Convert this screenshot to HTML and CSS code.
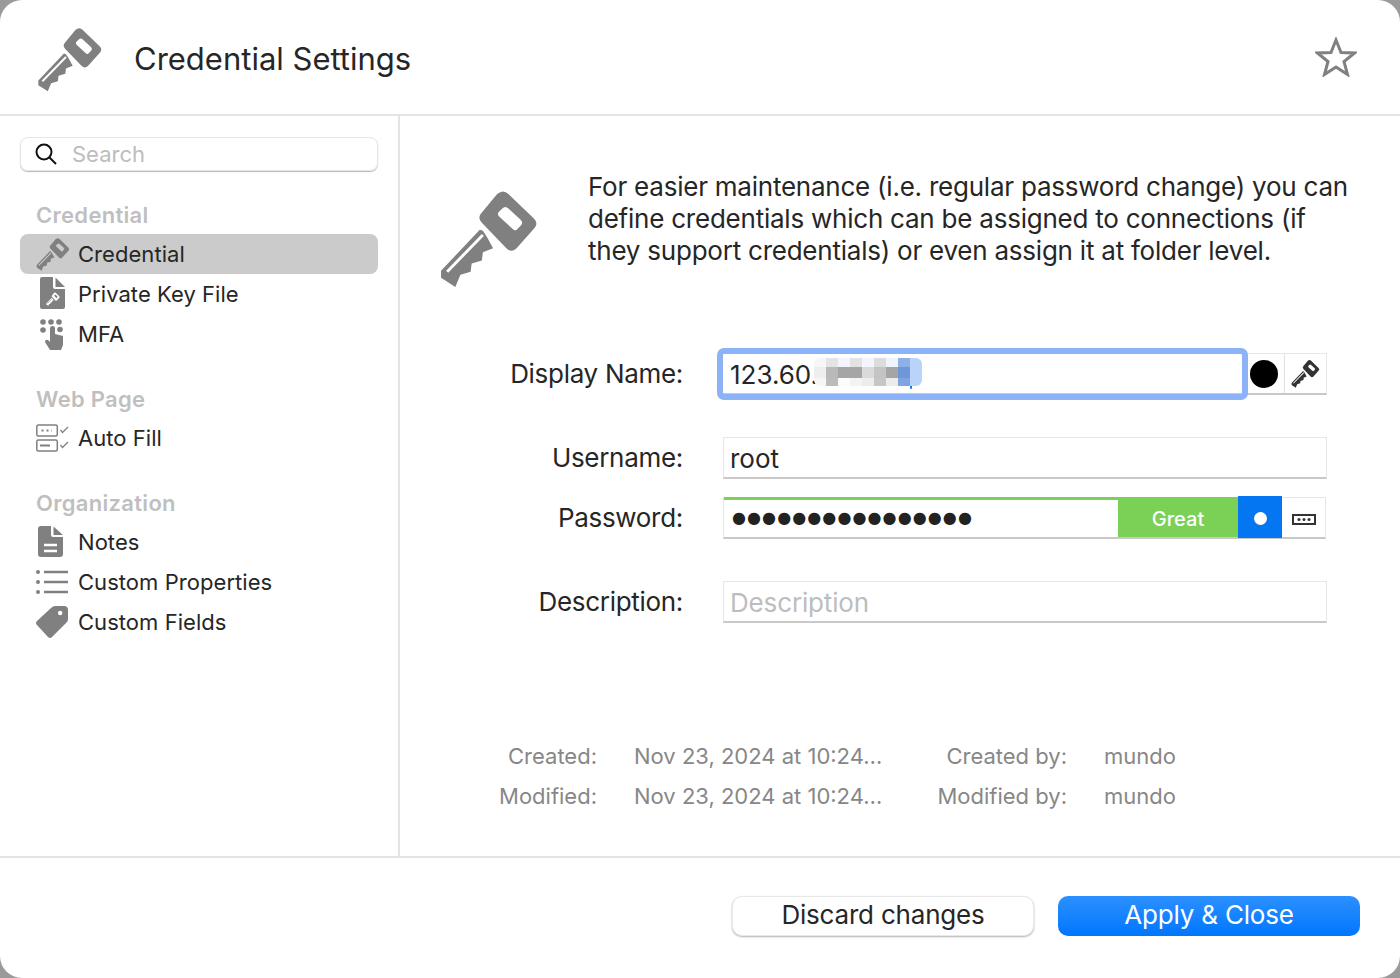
FILE: index.html
```html
<!DOCTYPE html>
<html lang="en">
<head>
    <meta charset="UTF-8">
    <title>Credential Settings</title>
    <link rel="stylesheet" href="styles.css">
</head>
<body>
    <svg class="defs" width="0" height="0">
        <symbol id="key" viewBox="9 8 98 98">
            <path fill-rule="evenodd" d="M66,14 Q72,9 77,14 L102,38 Q107,43 102,48 L85,67 Q80,72 75,67 L51,42 Q46,37 51,32 Z M71,28 Q74,25 77,28 L89,39 Q92,42 89,45 L86,48 Q84,51 81,48 L69,37 Q65,34 68,31 Z"/>
            <path fill-rule="evenodd" d="M49,49 L11,89 L11,96 L25,105 L30,93 L40,90 L41,82 L51,79 L52,71 L62,67 L56,56 L52,50 Z M51,53 L53,55 L18,91 L16,89 Z"/>
        </symbol>
    </svg>

    <div class="window">
        <header class="topbar">
            <svg class="top-key"><use href="#key"/></svg>
            <h1>Credential Settings</h1>
            <svg class="star" viewBox="0 0 42 40"><path d="M21,3 L26,15.500 L39.500,16 L29,24.500 L32.500,37.500 L21,30 L9.500,37.500 L13,24.500 L2.500,16 L16,15.500 Z"/></svg>
        </header>

        <div class="middle">
            <aside class="sidebar">
                <div class="search">
                    <svg class="search-icon" viewBox="0 0 22 22"><circle cx="9" cy="9" r="7.500"/><path d="M14.500,14.500 L21,21"/></svg>
                    <span>Search</span>
                </div>

                <h3>Credential</h3>
                <div class="row selected">
                    <svg class="ico"><use href="#key"/></svg>Credential
                </div>
                <div class="row">
                    <svg class="ico" viewBox="0 0 34 34">
                        <path d="M6,0 H17 V10 Q17,12 19,12 H29 V30 Q29,32 27,32 H6 Q4,32 4,30 V2 Q4,0 6,0Z"/>
                        <path d="M19.500,0.500 L29,10 H19.500Z"/>
                        <svg class="mini" x="10" y="15" width="14" height="14"><use href="#key"/></svg>
                    </svg>Private Key File
                </div>
                <div class="row">
                    <svg class="ico" viewBox="0 0 34 34">
                        <circle cx="7" cy="5" r="2.800"/><circle cx="15" cy="5" r="2.800"/><circle cx="23" cy="5" r="2.800"/>
                        <circle cx="7" cy="13" r="2.800"/><circle cx="24" cy="12.500" r="2.800"/>
                        <path d="M14,11 Q14,9 16.500,9 Q19,9 19,11 V17 L27,19 V28 L25,33 H14 L9,25 Q9,22 12,23 L14,25 Z"/>
                    </svg>MFA
                </div>

                <h3>Web Page</h3>
                <div class="row">
                    <svg class="ico lines" viewBox="0 0 34 34">
                        <rect x="0.800" y="4" width="20.500" height="11" rx="1.500"/>
                        <rect x="0.800" y="19" width="20.500" height="11" rx="1.500"/>
                        <path class="thin" d="M24.500,9 L26.500,11.500 L32,6"/>
                        <path class="thin" d="M24.500,24 L26.500,26.500 L32,21"/>
                        <path d="M4,24.500 H14"/>
                        <path class="dotted" d="M5.500,9.500 H16"/>
                    </svg>Auto Fill
                </div>

                <h3>Organization</h3>
                <div class="row">
                    <svg class="ico" viewBox="0 0 34 34">
                        <path d="M5,1 H15 V10 Q15,12 17,12 H27 V29 Q27,32 24,32 H5 Q2,32 2,29 V4 Q2,1 5,1Z"/>
                        <path d="M17.500,1.500 L27,10 H17.500Z"/>
                        <path class="cut" d="M8,20 H21 M8,26 H21"/>
                    </svg>Notes
                </div>
                <div class="row">
                    <svg class="ico lines list" viewBox="0 0 34 34">
                        <circle class="solid" cx="2" cy="7" r="2"/><circle class="solid" cx="2" cy="17" r="2"/><circle class="solid" cx="2" cy="27" r="2"/>
                        <path d="M8,7 H32 M8,17 H32 M8,27 H32"/>
                    </svg>Custom Properties
                </div>
                <div class="row">
                    <svg class="ico" viewBox="0 0 34 34">
                        <path fill-rule="evenodd" d="M15,3 Q17,1 19,1 H28 Q32,1 32,5 V14 Q32,16 31,17 L16,32 Q14,34 12,32 L1,20 Q-1,18 1,16 Z M22,8 A2.200,2.200 0 1 0 26.400,8 A2.200,2.200 0 1 0 22,8 Z"/>
                    </svg>Custom Fields
                </div>
            </aside>

            <main class="content">
                <section class="intro">
                    <svg class="big-key"><use href="#key"/></svg>
                    <p>For easier maintenance (i.e. regular password change) you can define credentials which can be assigned to connections (if they support credentials) or even assign it at folder level.</p>
                </section>

                <section class="form">
                    <label>Display Name:</label>
                    <div class="field name-field">
                        <div class="name-input">
                            123.60.
                            <i class="caret"></i>
                            <svg class="mosaic" viewBox="0 0 108 28" shape-rendering="crispEdges">
                                <rect x="0" y="0" width="12" height="9" fill="#f6f6f6"/><rect x="12" y="0" width="12" height="9" fill="#e4e4e4"/><rect x="24" y="0" width="12" height="9" fill="#f2f5fc"/><rect x="36" y="0" width="12" height="9" fill="#e3e3e3"/><rect x="48" y="0" width="12" height="9" fill="#f2f5fc"/><rect x="60" y="0" width="12" height="9" fill="#dcdcdc"/><rect x="72" y="0" width="12" height="9" fill="#f0f4fd"/><rect x="84" y="0" width="12" height="9" fill="#8fb0e6"/><rect x="96" y="0" width="12" height="9" fill="#b9d3fa"/>
                                <rect x="0" y="9" width="12" height="11" fill="#eeeeee"/><rect x="12" y="9" width="12" height="11" fill="#b9b9b9"/><rect x="24" y="9" width="12" height="11" fill="#a5a5a5"/><rect x="36" y="9" width="12" height="11" fill="#a5a5a5"/><rect x="48" y="9" width="12" height="11" fill="#dadada"/><rect x="60" y="9" width="12" height="11" fill="#c4c4c4"/><rect x="72" y="9" width="12" height="11" fill="#a5a5a5"/><rect x="84" y="9" width="12" height="11" fill="#6f97d8"/><rect x="96" y="9" width="12" height="11" fill="#b9d3fa"/>
                                <rect x="0" y="20" width="12" height="8" fill="#f6f6f6"/><rect x="12" y="20" width="12" height="8" fill="#bbbbbb"/><rect x="24" y="20" width="12" height="8" fill="#fbfbfb"/><rect x="36" y="20" width="12" height="8" fill="#f3f3f3"/><rect x="48" y="20" width="12" height="8" fill="#ececec"/><rect x="60" y="20" width="12" height="8" fill="#c6c6c6"/><rect x="72" y="20" width="12" height="8" fill="#ececec"/><rect x="84" y="20" width="12" height="8" fill="#7fa4e0"/><rect x="96" y="20" width="12" height="8" fill="#b9d3fa"/>
                            </svg>
                        </div>
                        <div class="swatch"><i></i></div>
                        <div class="cell"><svg class="cell-key"><use href="#key"/></svg></div>
                    </div>

                    <label class="far">Username:</label>
                    <div class="field far">root</div>

                    <label class="near">Password:</label>
                    <div class="field pass-field near">
                        <div class="dots">●●●●●●●●●●●●●●●●</div>
                        <div class="strength">Great</div>
                        <div class="reveal"><i></i></div>
                        <div class="cell">
                            <svg class="keyboard" viewBox="0 0 24 11"><rect x="1" y="1" width="22" height="9"/><circle cx="7" cy="5.500" r="1.500"/><circle cx="12" cy="5.500" r="1.500"/><circle cx="17" cy="5.500" r="1.500"/></svg>
                        </div>
                    </div>

                    <label class="far">Description:</label>
                    <div class="field far placeholder">Description</div>
                </section>

                <section class="meta">
                    <span class="key">Created:</span><span>Nov 23, 2024 at 10:24…</span><span class="key">Created by:</span><span>mundo</span>
                    <span class="key">Modified:</span><span>Nov 23, 2024 at 10:24…</span><span class="key">Modified by:</span><span>mundo</span>
                </section>
            </main>
        </div>

        <footer class="bottombar">
            <button class="btn">Discard changes</button>
            <button class="btn primary">Apply &amp; Close</button>
        </footer>
    </div>
</body>
</html>
```

FILE: styles.css
```css
html, body { height: 100%; }
body {
    margin: 0;
    overflow: hidden;
    background: #9a9a9a;
    font-family: Inter, "Liberation Sans", sans-serif;
    color: #262626;
}
.defs { position: absolute; }

.window {
    height: 978px;
    display: flex;
    flex-direction: column;
    background: #fff;
    border-radius: 22px;
    overflow: hidden;
}

/* top bar */
.topbar {
    height: 114px;
    flex: none;
    display: flex;
    align-items: center;
    padding: 0 43px 0 37px;
    border-bottom: 2px solid #e4e4e4;
}
.top-key { width: 66px; height: 66px; fill: #808080; margin-top: 3px; }
h1 {
    flex: 1;
    margin: 0 0 0 31px;
    padding-top: 2px;
    font-size: 31px;
    font-weight: 400;
    letter-spacing: 0;
}
.star { width: 42px; height: 40px; fill: none; stroke: #808080; stroke-width: 3; }

.middle { flex: 1; display: flex; min-height: 0; }

/* sidebar */
.sidebar {
    width: 400px;
    flex: none;
    box-sizing: border-box;
    padding: 21px 20px 0;
    border-right: 2px solid #e4e4e4;
    font-size: 22px;
}
.search {
    height: 34px;
    box-sizing: border-box;
    display: flex;
    align-items: center;
    padding-left: 14px;
    border: 1px solid #e6e6e6;
    border-radius: 8px;
    box-shadow: 0 1px 1px #b5b5b5;
    color: #bdbdbd;
}
.search-icon { width: 22px; height: 22px; fill: none; stroke: #111; stroke-width: 2; margin-right: 15px; }
h3 {
    margin: 28px 0 0 16px;
    height: 36px;
    line-height: 35px;
    font-size: 22px;
    font-weight: 600;
    color: #bfbfbf;
    letter-spacing: 0.3px;
}
.search + h3 { margin-top: 27px; }
.row {
    height: 40px;
    display: flex;
    align-items: center;
    padding-left: 16px;
    border-radius: 8px;
    letter-spacing: 0.05px;
}
.row.selected { background: #cbcbcb; }
.ico { width: 34px; height: 34px; flex: none; margin-right: 8px; fill: #808080; }
.mini { fill: #fff; }
.cut { fill: none; stroke: #fff; stroke-width: 2.500; }
.lines { fill: none; stroke: #808080; stroke-width: 2; }
.lines rect { stroke-width: 1.500; }
.lines .thin { stroke-width: 1.300; }
.lines .dotted { stroke-width: 2; stroke-dasharray: 2 3; }
.lines .solid { fill: #808080; stroke: none; }
.list { stroke-width: 2.500; }

/* main panel */
.content { flex: 1; min-width: 0; }
.intro {
    display: flex;
    padding: 55px 42px 0 39px;
    height: 96px;
}
.big-key { width: 100px; height: 100px; flex: none; fill: #808080; margin: 17px 49px 0 0; }
.intro p {
    margin: 0;
    width: 762px;
    font-size: 26px;
    line-height: 32px;
    letter-spacing: -0.23px;
}

.form {
    margin-top: 86px;
    display: grid;
    grid-template-columns: 283px 604px;
    column-gap: 40px;
    font-size: 26px;
    align-items: center;
}
.form label { text-align: right; letter-spacing: -0.3px; position: relative; top: -1px; }
.form .far { margin-top: 42px; }
.form .near { margin-top: 18px; }
.field {
    height: 42px;
    box-sizing: border-box;
    display: flex;
    align-items: center;
    padding: 2px 0 0 6px;
    border: 1px solid #e6e6e6;
    border-bottom: 2px solid #c8c8c8;
}
.placeholder { color: #bdbdbd; letter-spacing: -0.15px; }

.name-field { padding: 0; border-left: 0; position: relative; }
.name-input {
    flex: 1;
    height: 40px;
    margin-top: 1px;
    box-sizing: border-box;
    padding-left: 7px;
    line-height: 42px;
    position: relative;
    outline: 6px solid #8cb3f8;
    border-radius: 1px;
    z-index: 1;
}
.mosaic {
    position: absolute;
    left: 91px;
    top: 4px;
    width: 108px;
    height: 28px;
    border-radius: 6px;
}
.caret {
    position: absolute;
    left: 187px;
    top: 4px;
    width: 2px;
    height: 31px;
    background: #0a7bf5;
    border-radius: 1px;
}
.swatch { width: 36px; height: 100%; margin-left: 6px; display: flex; align-items: center; flex: none; }
.swatch i { width: 28px; height: 28px; margin-left: 2px; background: #000; border-radius: 50%; }
.cell {
    width: 42px;
    height: 100%;
    flex: none;
    border-left: 1px solid #e0e0e0;
    box-sizing: border-box;
    display: flex;
    align-items: center;
    justify-content: center;
}
.cell-key { width: 29px; height: 29px; fill: #333; }

.pass-field { padding: 0; border-top: 0; margin-right: 1px; }
.pass-field .cell { width: 43px; border-top: 1px solid #e6e6e6; border-left: 0; }
.dots {
    flex: 1;
    height: 100%;
    box-sizing: border-box;
    padding-left: 8px;
    border-top: 3px solid #7bd155;
    font-family: "DejaVu Sans", sans-serif;
    font-size: 16px;
    letter-spacing: 1.1px;
    line-height: 36px;
    color: #222;
}
.strength {
    width: 120px;
    height: 40px;
    flex: none;
    background: #7bd155;
    color: #fff;
    font-size: 20px;
    font-weight: 500;
    line-height: 44px;
    text-align: center;
}
.reveal {
    width: 44px;
    height: 42px;
    flex: none;
    background: #0476f2;
    display: flex;
    align-items: center;
    justify-content: center;
}
.reveal i { width: 13px; height: 13px; margin-top: 3px; background: #fff; border-radius: 50%; }
.keyboard { width: 24px; height: 11px; margin-top: 3px; }
.keyboard rect { fill: none; stroke: #333; stroke-width: 2; }
.keyboard circle { fill: #333; }

.meta {
    margin-top: 113px;
    display: grid;
    grid-template-columns: 197px 250px 146px auto;
    column-gap: 37px;
    grid-auto-rows: 40px;
    align-items: center;
    font-size: 22px;
    color: #878787;
}
.meta .key { text-align: right; }

/* bottom bar */
.bottombar {
    height: 122px;
    flex: none;
    box-sizing: border-box;
    border-top: 2px solid #e4e4e4;
    display: flex;
    justify-content: flex-end;
    gap: 24px;
    padding: 38px 40px 0 0;
}
.btn {
    width: 302px;
    height: 40px;
    padding: 0 0 3px;
    font: 400 26px Inter, "Liberation Sans", sans-serif;
    letter-spacing: -0.2px;
    color: #262626;
    background: #fff;
    border: 1px solid #e8e8e8;
    border-radius: 10px;
    box-shadow: 0 1px 2px #b0b0b0;
}
.btn.primary {
    color: #fff;
    border: 0;
    background: linear-gradient(#2c90ff, #0076fe);
    box-shadow: none;
}
```
